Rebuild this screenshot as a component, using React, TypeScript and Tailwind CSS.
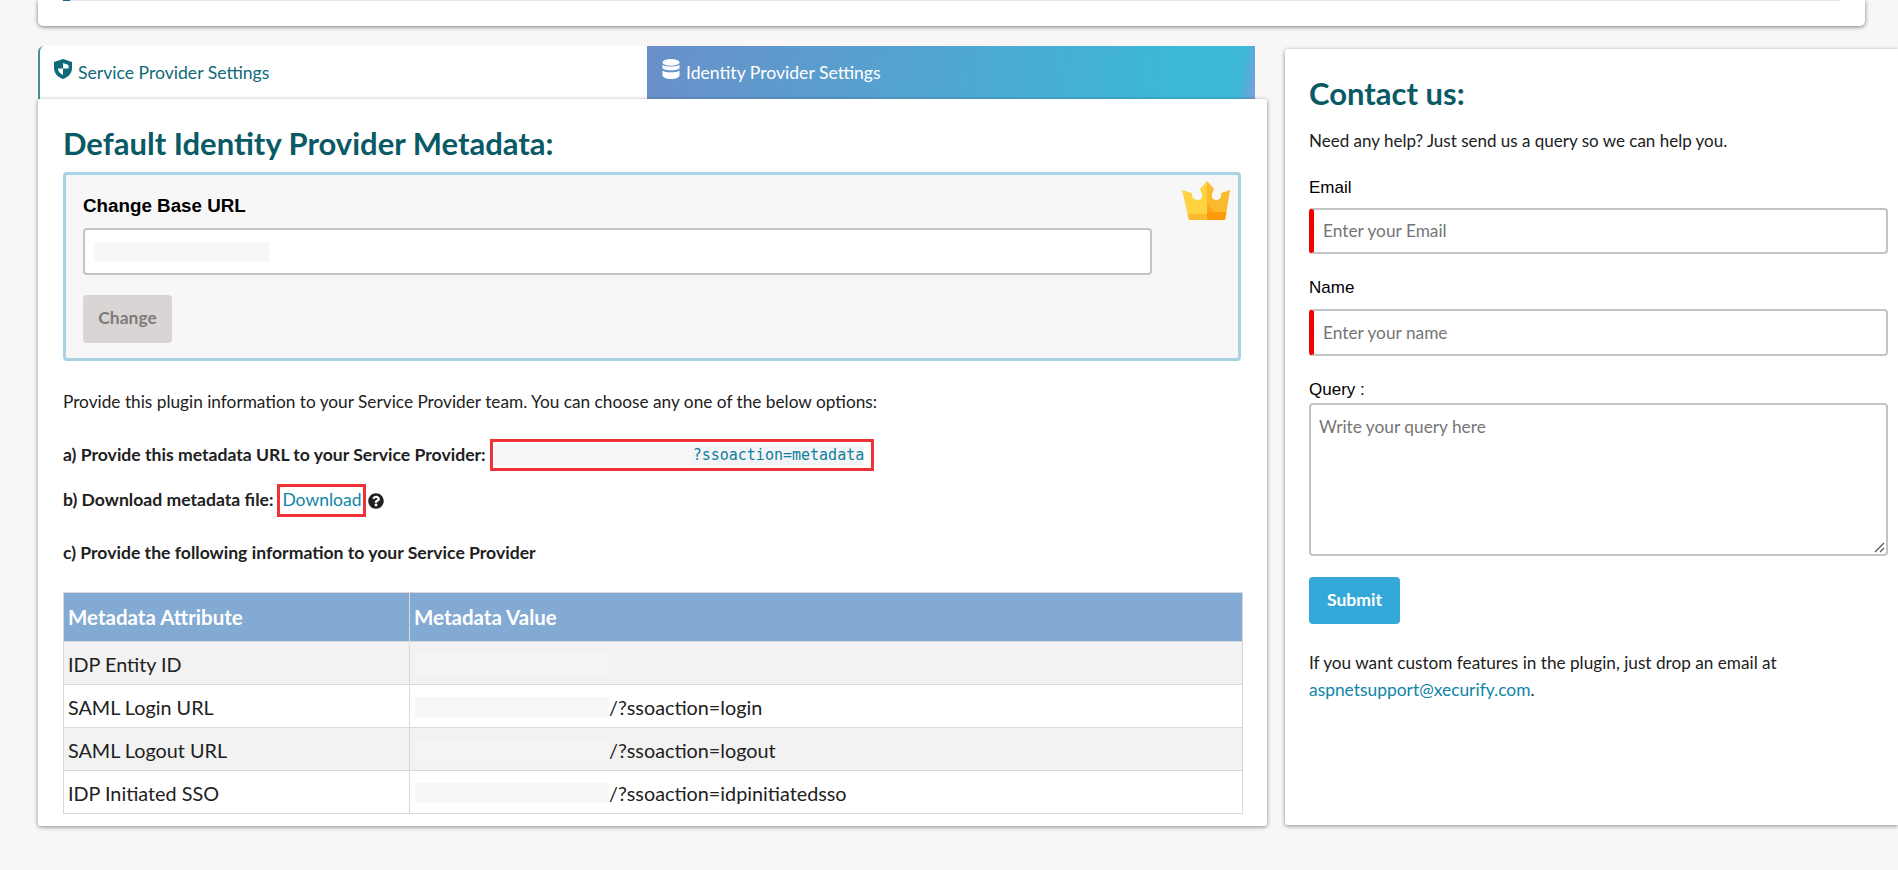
import React from "react";
import { FaQuestionCircle } from "react-icons/fa";

const lato = "font-['Lato',sans-serif]";
const arial = "font-['Liberation_Sans',sans-serif]";

function Crown() {
  return (
    <svg viewBox="0 0 48 39" className="absolute right-[8px] top-[6px] h-[39px] w-[48px]">
      <path d="M25 0 L32 8 L30 13 Q29 19 35 19 Q40 18 39 12 L48 9 L43 39 L25 39 Z" fill="#fbb92e" />
      <path d="M25 0 L18 8 L20 13 Q21 19 15 19 Q9 18 10 12 L0 9 L7 39 L25 39 Z" fill="#fdd341" />
      <path d="M25 31 L44.4 31 L43 39 L25 39 Z" fill="#ff9a0a" />
      <path d="M25 22 L32 31 L25 31 Z" fill="#fda51c" />
      <path d="M5.6 33 L25 33 L25 39 L7 39 Z" fill="#fbb92e" />
    </svg>
  );
}

function ShieldIcon() {
  return (
    <svg viewBox="0 0 18 20" className="h-[20px] w-[18px] shrink-0">
      <path d="M9 0 L18 3 V9 C18 14.5 14 18.3 9 20 C4 18.3 0 14.5 0 9 V3 Z" fill="#0e6a78" />
      <path d="M9 4 L14.5 6 V9.5 H9 Z" fill="#ffffff" />
      <path d="M9 9.5 V16 C6.3 14.8 4.2 12.6 3.8 9.5 Z" fill="#ffffff" />
    </svg>
  );
}

function DbIcon() {
  return (
    <svg viewBox="0 0 18 20" className="h-[20px] w-[18px] shrink-0" fill="#ffffff">
      <ellipse cx="9" cy="3.4" rx="8.5" ry="3.4" />
      <path d="M0.5 5.8 C2.5 8.2 15.5 8.2 17.5 5.8 V9.2 C15.5 12 2.5 12 0.5 9.2 Z" />
      <path d="M0.5 11.4 C2.5 14 15.5 14 17.5 11.4 V16.4 C17 18.6 13 20 9 20 C5 20 1 18.6 0.5 16.4 Z" />
    </svg>
  );
}

function Mask({ w, bg = "bg-[#f7f7f7]" }: { w: number; bg?: string }) {
  return <span className={`inline-block h-[20px] shrink-0 ${bg}`} style={{ width: w }} />;
}

const rows: [string, string, string][] = [
  ["IDP Entity ID", "", "bg-[#f2f2f2]"],
  ["SAML Login URL", "/?ssoaction=login", "bg-white"],
  ["SAML Logout URL", "/?ssoaction=logout", "bg-[#f2f2f2]"],
  ["IDP Initiated SSO", "/?ssoaction=idpinitiatedsso", "bg-white"],
];

export default function App() {
  return (
    <div className={`${lato} relative h-[870px] w-[1898px] overflow-hidden bg-[#f8f6f6] text-[#212121]`}>
      <div className="ml-[38px] h-[26px] w-[1827px] rounded-b-[5px] bg-white pl-[25px] shadow-[0_1px_4px_rgba(0,0,0,0.5)]">
        <div className="flex h-px w-[1777px] bg-[#dfe6ea]">
          <div className="h-px w-[7px] bg-[#0e6a78]" />
        </div>
      </div>

      <div className="mt-[20px] flex items-start pl-[38px]">
        <div className="w-[1229px]">
          <div className="flex h-[53px] w-[1217px] text-[17.6px]">
            <div className="flex w-[609px] items-start gap-[6px] rounded-tl-[6px] border-l-2 border-[#4b8d97] bg-white pl-[14px] pt-[13px] text-[#0e6a78]">
              <ShieldIcon />
              <span className="leading-[28px]">Service Provider Settings</span>
            </div>
            <div className="flex flex-1 items-start gap-[6px] bg-[linear-gradient(100deg,#6a8fc9_0%,#3db8d6_85%,#3db8d6_97%,#7a9fdc_100%)] pl-[15px] pt-[13px] text-white">
              <DbIcon />
              <span className="leading-[28px]">Identity Provider Settings</span>
            </div>
          </div>
          <div className="relative h-[727px] rounded-[3px] bg-white px-[25px] shadow-[0_1px_4px_rgba(0,0,0,0.45)]">
            <h1 className="pt-[25px] text-[31px] font-bold leading-[38px] text-[#0a5a66]">Default Identity Provider Metadata:</h1>
            <div className="relative mt-[10px] h-[189px] w-[1178px] rounded-[4px] border-[3px] border-[#a9d3e3] bg-[#f7f7f7] px-[17px] pt-[19px]">
              <div className={`${arial} text-[18.8px] font-bold leading-[24px] text-black`}>Change Base URL</div>
              <Crown />
              <div className="mt-[10px] flex h-[47px] w-[1069px] items-center rounded-[4px] border-2 border-[#c4c4c4] bg-white pl-[9px]">
                <Mask w={175} />
              </div>
              <button className="mt-[20px] block h-[48px] w-[89px] rounded-[4px] bg-[#dad5d5] pb-[2px] text-center text-[17.5px] font-bold text-[#807b7b]">Change</button>
            </div>
            <p className="mt-[29px] text-[17.25px] leading-[24px]">Provide this plugin information to your Service Provider team. You can choose any one of the below options:</p>
            <div className="mt-[25px] flex h-[32px] items-center whitespace-nowrap text-[17.6px] font-bold">
              <span>a) Provide this metadata URL to your Service Provider:</span>
              <span className="ml-[4px] flex h-[32px] w-[384px] shrink-0 items-center border-[3px] border-[#ee3338] pl-[1px] pr-[5px]">
                <Mask w={198} />
                <code className="flex h-[19px] shrink-0 items-center bg-[#f3f4f5] pl-[1px] font-['DejaVu_Sans_Mono',monospace] text-[15px] font-normal text-[#0f7f9e]">?ssoaction=metadata</code>
              </span>
            </div>
            <div className="mt-[13px] flex h-[33px] items-center whitespace-nowrap text-[17.6px] font-bold">
              <span>b) Download metadata file:</span>
              <span className="ml-[4px] flex h-[33px] w-[89px] items-center justify-center border-[3px] border-[#ee3338] text-[17.5px] font-normal text-[#0f85a8]">Download</span>
              <FaQuestionCircle className="ml-[2px] h-[16px] w-[16px] text-[#212121]" />
            </div>
            <div className="mt-[24px] text-[17.6px] font-bold leading-[24px]">c) Provide the following information to your Service Provider</div>
            <table className="mt-[27px] w-[1180px] table-fixed border-collapse text-[19.8px]">
              <thead>
                <tr className="h-[49px] bg-[#83aad3] text-left text-[20.5px] font-bold text-white">
                  <th className="w-[346px] border border-[#d9d9d9] px-[4px]">Metadata Attribute</th>
                  <th className="border border-[#d9d9d9] px-[4px]">Metadata Value</th>
                </tr>
              </thead>
              <tbody>
                {rows.map(([a, v, bg]) => (
                  <tr key={a} className={`h-[43px] ${bg}`}>
                    <td className="border border-[#d9d9d9] px-[4px] pt-[2px] leading-[24px]">{a}</td>
                    <td className="border border-[#d9d9d9] px-[4px] pt-[2px] leading-[24px]">
                      <span className="flex items-center pl-[1px]">
                        <Mask w={194} bg={bg === "bg-white" ? "bg-[#f7f7f7]" : "bg-[#f5f5f5]"} />
                        <span>{v}</span>
                      </span>
                    </td>
                  </tr>
                ))}
              </tbody>
            </table>
          </div>
        </div>

        <div className="ml-[18px] mt-[3px] h-[776px] flex-1 rounded-l-[3px] bg-white pl-[24px] pr-[10px] shadow-[0_1px_4px_rgba(0,0,0,0.45)]">
          <h2 className="pt-[25px] text-[31px] font-bold leading-[38px] text-[#0a5a66]">Contact us:</h2>
          <p className="mt-[17px] text-[17px] leading-[24px]">Need any help? Just send us a query so we can help you.</p>
          <label className={`${arial} mt-[23px] block text-[17px] leading-[24px] text-black`}>Email</label>
          <div className="mt-[8px] flex h-[46px] items-center rounded-[4px] border-2 border-l-[5px] border-[#c4c4c4] border-l-[#f00000] bg-white pl-[9px] text-[17.3px] text-[#757575]">Enter your Email</div>
          <label className={`${arial} mt-[22px] block text-[17px] leading-[24px] text-black`}>Name</label>
          <div className="mt-[9px] flex h-[47px] items-center rounded-[4px] border-2 border-l-[5px] border-[#c4c4c4] border-l-[#f00000] bg-white pl-[9px] text-[17.3px] text-[#757575]">Enter your name</div>
          <label className={`${arial} mt-[22px] block text-[17px] leading-[24px] text-black`}>Query :</label>
          <div className="relative mt-[1px] h-[153px] rounded-[4px] border-2 border-[#c4c4c4] bg-white pl-[8px] pt-[10px] text-[17.3px] leading-[24px] text-[#757575]">
            Write your query here
            <svg viewBox="0 0 12 12" className="absolute bottom-[1px] right-[1px] h-[12px] w-[12px]" stroke="#555" strokeWidth="1.2">
              <path d="M2 11 L11 2 M7 11 L11 7" />
            </svg>
          </div>
          <button className="mt-[21px] block h-[47px] w-[91px] rounded-[4px] bg-[#35a8da] text-[17.6px] font-bold text-white">Submit</button>
          <p className="mt-[25px] text-[17.2px] leading-[27px]">
            If you want custom features in the plugin, just drop an email at
            <br />
            <span className="text-[17.4px] text-[#0f85a8]">aspnetsupport@xecurify.com</span>.
          </p>
        </div>
      </div>
    </div>
  );
}
